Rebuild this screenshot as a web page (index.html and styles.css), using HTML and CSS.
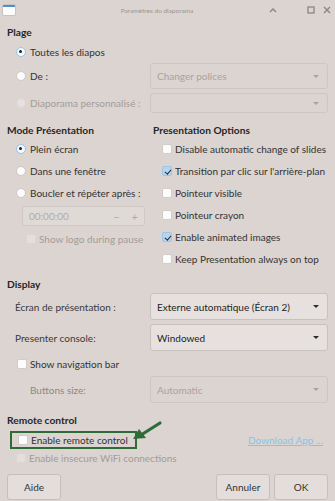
FILE: index.html
```html
<!DOCTYPE html>
<html lang="fr">
<head>
    <meta charset="UTF-8">
    <title>Paramètres du diaporama</title>
    <link rel="stylesheet" href="styles.css">
</head>
<body>
<div class="window">
    <div class="titlebar">
        <div class="app-icon"></div>
        <div class="title">Paramètres du diaporama</div>
        <div class="controls">
            <svg width="8" height="6" viewBox="0 0 8 6"><path d="M1 5 L4 2 L7 5" fill="none" stroke="#8c8583" stroke-width="1.4"/></svg>
            <svg width="8" height="8" viewBox="0 0 8 8"><rect x="1" y="1" width="6" height="6" fill="none" stroke="#8c8583" stroke-width="1.3"/></svg>
            <svg width="8" height="8" viewBox="0 0 8 8"><path d="M1 1 L7 7 M7 1 L1 7" fill="none" stroke="#8c8583" stroke-width="1.4"/></svg>
        </div>
    </div>

    <div class="content">
        <div class="section-title">Plage</div>
        <div class="row h22 indent r-all"><span class="radio on"></span>Toutes les diapos</div>
        <div class="form-row r-de">
            <div class="indent"><span class="radio"></span>De :</div>
            <div class="combo disabled"><span>Changer polices</span><span class="arrow"></span></div>
        </div>
        <div class="form-row r-custom">
            <div class="indent muted"><span class="radio off"></span>Diaporama personnalisé :</div>
            <div class="combo disabled"><span></span><span class="arrow"></span></div>
        </div>

        <div class="columns">
            <div class="col-left">
                <div class="section-title">Mode Présentation</div>
                <div class="row h22 indent"><span class="radio on"></span>Plein écran</div>
                <div class="row h22 indent"><span class="radio"></span>Dans une fenêtre</div>
                <div class="row h22 indent"><span class="radio"></span>Boucler et répéter après :</div>
                <div class="spinbox"><span>00:00:00</span><span class="spin-btns"><span>−</span><span>+</span></span></div>
                <div class="row h22 sub muted"><span class="check off"></span>Show logo during pause</div>
            </div>
            <div class="col-right">
                <div class="section-title">Presentation Options</div>
                <div class="row h22 indent"><span class="check"></span>Disable automatic change of slides</div>
                <div class="row h22 indent"><span class="check on"></span>Transition par clic sur l'arrière-plan</div>
                <div class="row h22 indent"><span class="check"></span>Pointeur visible</div>
                <div class="row h22 indent"><span class="check"></span>Pointeur crayon</div>
                <div class="row h22 indent"><span class="check on"></span>Enable animated images</div>
                <div class="row h22 indent"><span class="check"></span>Keep Presentation always on top</div>
            </div>
        </div>

        <div class="section-title s-display">Display</div>
        <div class="form-row r-screen">
            <div class="label">Écran de présentation :</div>
            <div class="combo"><span>Externe automatique (Écran 2)</span><span class="arrow"></span></div>
        </div>
        <div class="form-row r-console">
            <div class="label">Presenter console:</div>
            <div class="combo"><span>Windowed</span><span class="arrow"></span></div>
        </div>
        <div class="row h22 indent nav"><span class="check"></span>Show navigation bar</div>
        <div class="form-row r-size">
            <div class="label sub-label">Buttons size:</div>
            <div class="combo disabled"><span>Automatic</span><span class="arrow"></span></div>
        </div>

        <div class="section-title s-remote">Remote control</div>
        <div class="remote-row">
            <div class="highlight"><span class="check"></span>Enable remote control</div>
            <a class="link" href="#">Download App ...</a>
            <svg class="pointer" width="40" height="30" viewBox="0 0 40 30">
                <path d="M37 3 L18 15" stroke="#2f6b36" stroke-width="3.2" stroke-linecap="round" fill="none"/>
                <path d="M10 19 L16 9 L23 18 Z" fill="#2f6b36"/>
            </svg>
        </div>
        <div class="row h18 indent muted"><span class="check off"></span>Enable insecure WiFi connections</div>

        <div class="buttons">
            <button class="btn">Aide</button>
            <div class="btn-group">
                <button class="btn">Annuler</button>
                <button class="btn">OK</button>
            </div>
        </div>
    </div>
</div>
</body>
</html>
```

FILE: styles.css
```css
body {
    margin: 0;
    background: #dbd4d1;
    font-family: Lato, "Noto Sans", sans-serif;
    font-size: 10px;
    color: #333;
}
.window {
    width: 335px;
    height: 501px;
    background: #dbd4d1;
    overflow: hidden;
}
.titlebar {
    height: 20px;
    display: flex;
    align-items: center;
    padding: 0 4px 0 3px;
}
.app-icon {
    width: 12px;
    height: 10px;
    background: #fdfdfd;
    border-top: 2px solid #4f8fd0;
    box-sizing: border-box;
    border-radius: 1px;
    box-shadow: 0 0 0 1px #c9c3c0;
}
.title {
    flex: 1;
    text-align: center;
    font-size: 6.5px;
    color: #9b9491;
    padding-left: 30px;
}
.controls {
    display: flex;
    align-items: center;
    gap: 8px;
}
.controls svg:first-child {
    margin-right: 22px;
}
.content {
    padding: 0 7px;
}
.section-title {
    font-weight: 700;
    color: #262626;
    font-size: 10.2px;
    height: 16px;
    line-height: 16px;
    margin-top: 4px;
}
.row {
    display: flex;
    align-items: center;
    white-space: nowrap;
}
.h22 { height: 22px; }
.h18 { height: 18px; }
.indent { padding-left: 9px; display: flex; align-items: center; }
.sub { padding-left: 19px; }
.muted { color: #a39c99; }
.r-all { margin-top: 1px; }

.radio {
    width: 10px;
    height: 10px;
    border-radius: 50%;
    background: #fcfcfc;
    box-sizing: border-box;
    border: 1px solid #cfc8c5;
    margin-right: 4px;
    flex: none;
    position: relative;
}
.radio.on {
    background: #f5f8fb;
    border: 1.5px solid #94c4ea;
}
.radio.on::after {
    content: "";
    position: absolute;
    left: 2px;
    top: 2px;
    width: 3px;
    height: 3px;
    border-radius: 50%;
    background: #222;
}
.radio.off {
    background: #e6e1df;
    border-color: #dcd5d2;
}
.check {
    width: 10px;
    height: 10px;
    border-radius: 2px;
    background: #fcfcfc;
    box-sizing: border-box;
    border: 1px solid #d2cbc8;
    margin-right: 3px;
    flex: none;
    position: relative;
}
.check.on {
    background: #b5d6f0;
    border-color: #9cc6e8;
}
.check.on::after {
    content: "";
    position: absolute;
    left: 2.5px;
    top: 0.5px;
    width: 2.5px;
    height: 5px;
    border: solid #2d2d2d;
    border-width: 0 1.5px 1.5px 0;
    transform: rotate(40deg);
}
.check.off {
    background: #e4dfdc;
    border-color: #dcd5d2;
}

.form-row {
    display: grid;
    grid-template-columns: 143px 1fr;
    align-items: center;
}
.r-de { height: 26px; }
.r-custom { height: 20px; margin-top: 4px; }
.r-screen { height: 27px; margin-top: 1px; }
.r-console { height: 27px; margin-top: 4px; }
.r-size { height: 27px; margin-top: 1px; }
.label { padding-left: 8px; color: #3a3a3a; }
.sub-label { padding-left: 23px; color: #8f8885; }

.combo {
    height: 100%;
    box-sizing: border-box;
    border: 1px solid #c8c1be;
    border-radius: 3px;
    background: #e6e1de;
    display: flex;
    align-items: center;
    justify-content: space-between;
    padding: 0 8px 0 6px;
    color: #222;
}
.combo.disabled {
    background: #dbd4d1;
    border-color: #cdc6c3;
    color: #a9a29f;
}
.arrow {
    width: 0;
    height: 0;
    border-left: 3px solid transparent;
    border-right: 3px solid transparent;
    border-top: 3px solid #2b2b2b;
}
.combo.disabled .arrow {
    border-top-color: #a9a29f;
}

.columns {
    display: grid;
    grid-template-columns: 146px 1fr;
    margin-top: 5px;
}
.spinbox {
    margin: 2px 0 2px 15px;
    width: 123px;
    height: 20px;
    box-sizing: border-box;
    border: 1px solid #cfc8c5;
    border-radius: 3px;
    background: #e0dad7;
    display: flex;
    align-items: center;
    justify-content: space-between;
    padding: 0 6px 0 6px;
    color: #b2aba8;
}
.spin-btns {
    display: flex;
    gap: 12px;
    font-size: 11px;
}

.s-display { margin-top: 6px; }
.nav { padding-left: 10px; margin-top: 2px; }
.s-remote { margin-top: 9px; }

.remote-row {
    display: flex;
    align-items: center;
    justify-content: space-between;
    height: 18px;
    margin-top: 3px;
    position: relative;
}
.highlight {
    display: flex;
    align-items: center;
    width: 127px;
    height: 18px;
    box-sizing: border-box;
    border: 2px solid #2f6b36;
    padding-left: 6px;
    margin-left: 3px;
    white-space: nowrap;
}
.link {
    color: #84c4ee;
    text-decoration: underline;
    margin-right: 5px;
}
.pointer {
    position: absolute;
    left: 116px;
    top: -11px;
}
.buttons {
    display: flex;
    justify-content: space-between;
    margin-top: 7px;
}
.btn-group {
    display: flex;
    gap: 4px;
}
.btn {
    width: 54px;
    height: 26px;
    font-family: inherit;
    font-size: 10px;
    color: #333;
    background: #e3dedb;
    border: 1px solid #c6bfbc;
    border-radius: 3px;
    padding: 0;
}
```
